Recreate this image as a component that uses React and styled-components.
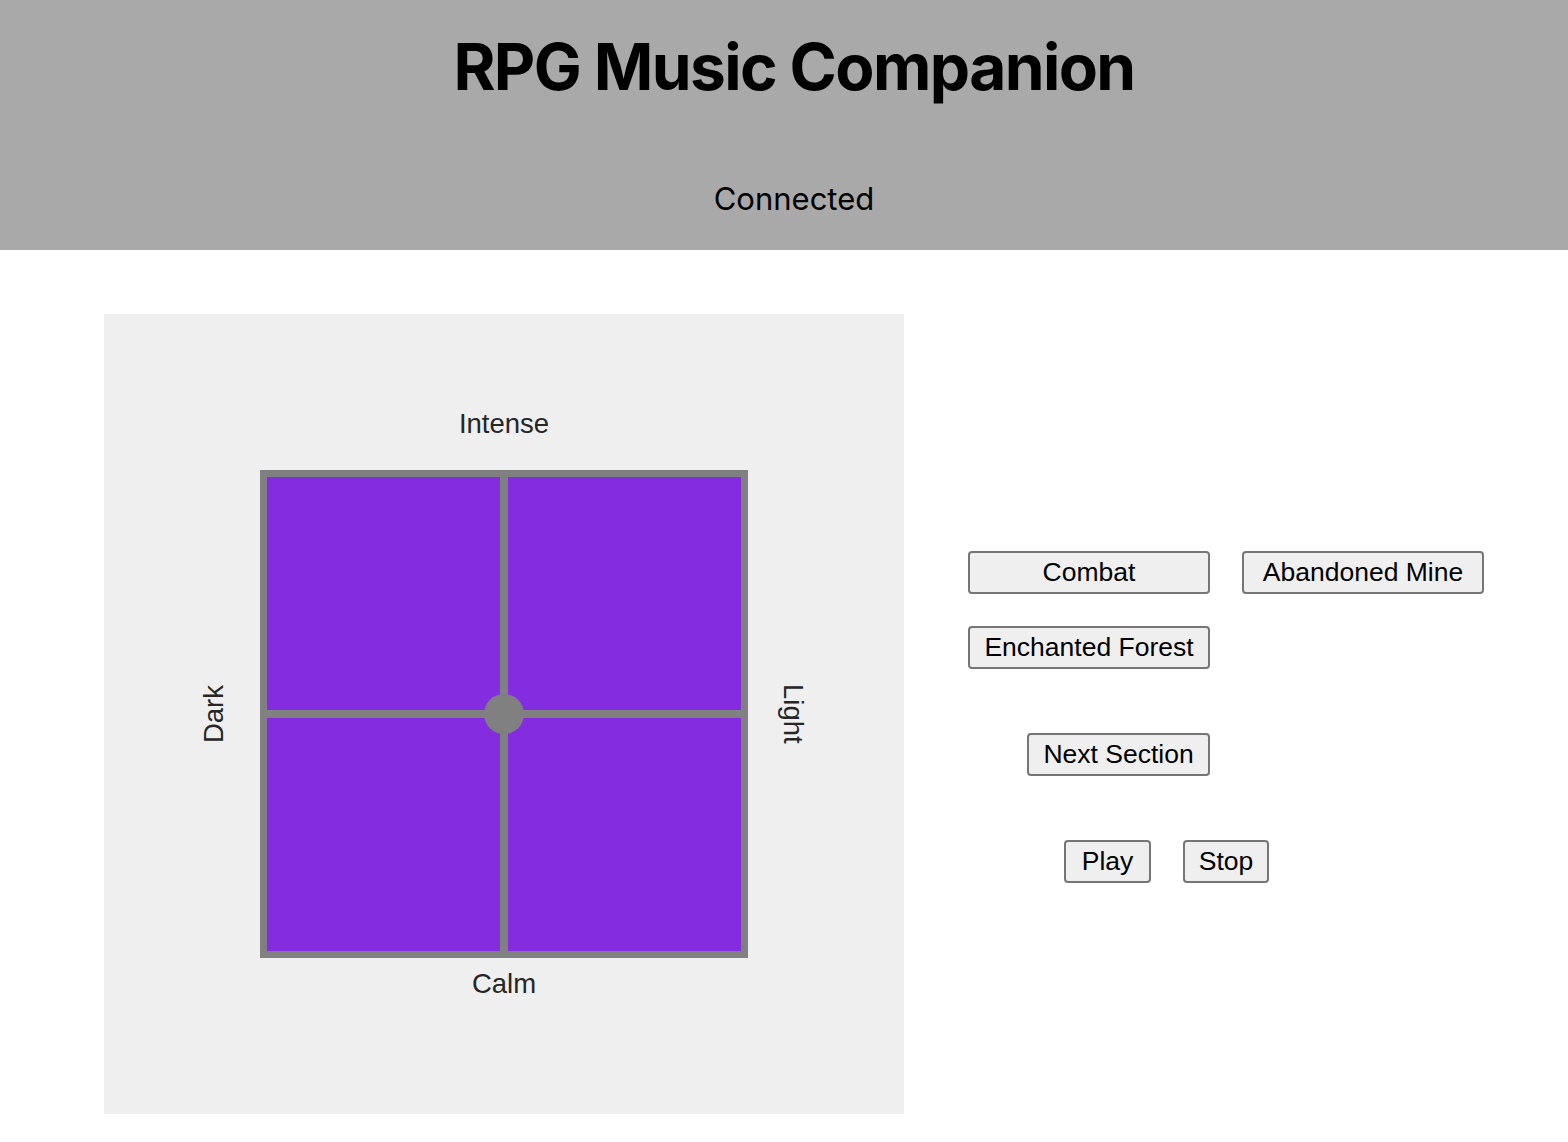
import React from 'react'
import styled, { createGlobalStyle } from 'styled-components'

const GlobalStyle = createGlobalStyle`
  body {
    margin: 0;
    background: white;
    font-family: Inter, 'Noto Sans', sans-serif;
  }
`

const Header = styled.header`
  height: 250px;
  padding-left: 20px;
  background: #a9a9a9;
  text-align: center;
  overflow: hidden;
`

const Title = styled.h1`
  margin: 28px 0 0;
  font-size: 64px;
  font-weight: 700;
  letter-spacing: -1.6px;
  line-height: 77px;
  color: #000;
`

const Status = styled.p`
  margin: 76px 0 0;
  font-size: 31px;
  line-height: 36px;
  color: #000;
`

const Main = styled.main`
  display: flex;
  align-items: center;
  padding: 64px 0 0 104px;
`

const Panel = styled.div`
  width: 800px;
  height: 800px;
  flex-shrink: 0;
  background: #efefef;
  display: grid;
  grid-template-columns: 1fr 488px 1fr;
  grid-template-rows: 1fr 488px 1fr;
  font-family: 'Liberation Sans', Arial, sans-serif;
  font-size: 27.5px;
  color: #262626;
`

const AxisLabel = styled.span`
  grid-area: ${p => p.area};
  justify-self: ${p => p.justify || 'center'};
  align-self: ${p => p.align || 'center'};
  margin: ${p => p.gap || '0'};
  writing-mode: ${p => (p.vertical ? 'vertical-rl' : 'horizontal-tb')};
  transform: ${p => (p.flip ? 'rotate(180deg)' : 'none')};
  line-height: 30px;
`

const Board = styled.div`
  grid-area: 2 / 2 / 3 / 3;
  position: relative;
  box-sizing: border-box;
  background: #808080;
  padding: 7px;
  display: grid;
  grid-template-columns: 233px 233px;
  grid-template-rows: 233px 233px;
  gap: 8px;
`

const Quadrant = styled.div`
  background: #842ce0;
`

const Handle = styled.div`
  position: absolute;
  left: 224px;
  top: 224px;
  width: 40px;
  height: 40px;
  border-radius: 50%;
  background: #808080;
`

const Controls = styled.div`
  margin-left: 64px;
  display: flex;
  flex-direction: column;
  padding-top: 6px;
`

const SceneGrid = styled.div`
  display: grid;
  grid-template-columns: 242px 242px;
  gap: 32px;
`

const NextRow = styled.div`
  width: 242px;
  display: flex;
  justify-content: flex-end;
  margin-top: 64px;
`

const TransportRow = styled.div`
  display: flex;
  gap: 32px;
  margin-top: 64px;
  padding-left: 96px;
`

const Button = styled.button`
  box-sizing: border-box;
  width: ${p => p.width || 242}px;
  height: 43px;
  padding: 0;
  background: #efefef;
  border: 2px solid #767676;
  border-radius: 4px;
  font-family: 'Liberation Sans', Arial, sans-serif;
  font-size: 26.5px;
  color: #000;
  cursor: pointer;
`

export default function App() {
  const scenes = ['Combat', 'Abandoned Mine', 'Enchanted Forest']
  return (
    <>
      <GlobalStyle />
      <Header>
        <Title>RPG Music Companion</Title>
        <Status>Connected</Status>
      </Header>
      <Main>
        <Panel>
          <AxisLabel area="1 / 2 / 2 / 3" align="end" gap="0 0 31px">
            Intense
          </AxisLabel>
          <AxisLabel area="2 / 1 / 3 / 2" justify="end" vertical flip gap="0 31px 0 0">
            Dark
          </AxisLabel>
          <Board>
            <Quadrant />
            <Quadrant />
            <Quadrant />
            <Quadrant />
            <Handle />
          </Board>
          <AxisLabel area="2 / 3 / 3 / 4" justify="start" vertical gap="0 0 0 30px">
            Light
          </AxisLabel>
          <AxisLabel area="3 / 2 / 4 / 3" align="start" gap="11px 0 0">
            Calm
          </AxisLabel>
        </Panel>
        <Controls>
          <SceneGrid>
            {scenes.map(s => (
              <Button key={s}>{s}</Button>
            ))}
          </SceneGrid>
          <NextRow>
            <Button width={183}>Next Section</Button>
          </NextRow>
          <TransportRow>
            <Button width={87}>Play</Button>
            <Button width={86}>Stop</Button>
          </TransportRow>
        </Controls>
      </Main>
    </>
  )
}
